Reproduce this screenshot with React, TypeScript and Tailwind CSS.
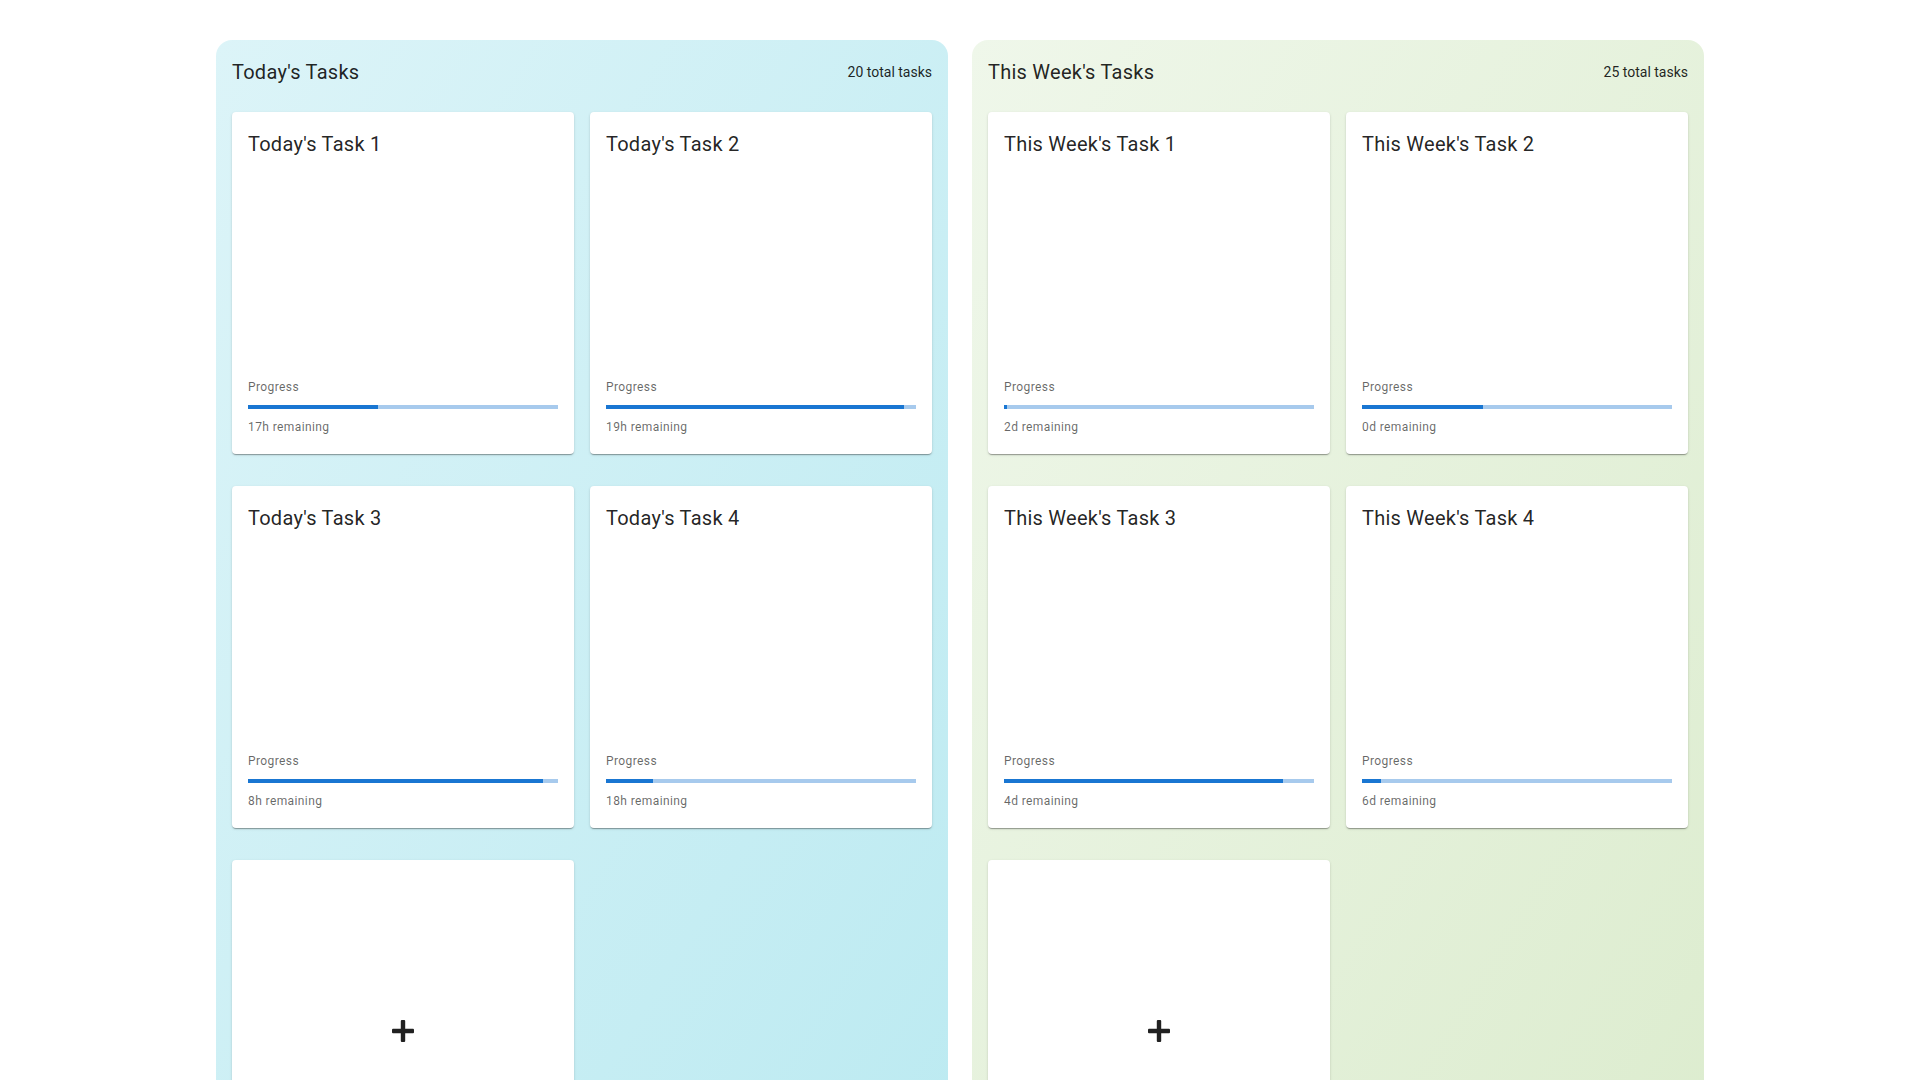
import React from "react";

type Task = { title: string; progress: number; remaining: string };

const TODAY: Task[] = [
  { title: "Today's Task 1", progress: 42, remaining: "17h remaining" },
  { title: "Today's Task 2", progress: 96, remaining: "19h remaining" },
  { title: "Today's Task 3", progress: 95, remaining: "8h remaining" },
  { title: "Today's Task 4", progress: 15, remaining: "18h remaining" },
];

const WEEK: Task[] = [
  { title: "This Week's Task 1", progress: 1, remaining: "2d remaining" },
  { title: "This Week's Task 2", progress: 39, remaining: "0d remaining" },
  { title: "This Week's Task 3", progress: 90, remaining: "4d remaining" },
  { title: "This Week's Task 4", progress: 6, remaining: "6d remaining" },
];

const cardCls =
  "flex h-[342px] flex-col rounded bg-white p-4 pb-[17px] shadow-[0px_2px_1px_-1px_rgba(0,0,0,0.2),0px_1px_1px_0px_rgba(0,0,0,0.14),0px_1px_3px_0px_rgba(0,0,0,0.12)]";

function TaskCard({ task }: { task: Task }) {
  return (
    <div className={cardCls}>
      <h3 className="text-[20px] leading-8 tracking-[0.25px] text-black/[0.87]">
        {task.title}
      </h3>
      <div className="flex-1" />
      <div>
        <div className="text-[12px] leading-5 tracking-[0.4px] text-black/60">
          Progress
        </div>
        <div className="mt-2 h-1 w-full overflow-hidden bg-[#a7caed]">
          <div
            className="h-full bg-[#1976d2]"
            style={{ width: `${task.progress}%` }}
          />
        </div>
        <div className="mt-2 text-[12px] leading-5 tracking-[0.4px] text-black/60">
          {task.remaining}
        </div>
      </div>
    </div>
  );
}

function AddCard() {
  return (
    <div className={`${cardCls} items-center justify-center`}>
      <svg width="22" height="22" viewBox="0 0 22 22" className="text-[#212121]">
        <rect x="8.8" y="0" width="4.4" height="22" rx="1" fill="currentColor" />
        <rect x="0" y="8.8" width="22" height="4.4" rx="1" fill="currentColor" />
      </svg>
    </div>
  );
}

function Panel({
  title,
  total,
  tasks,
  bg,
}: {
  title: string;
  total: number;
  tasks: Task[];
  bg: string;
}) {
  return (
    <section className={`rounded-2xl p-4 ${bg}`}>
      <div className="mb-6 flex items-center justify-between">
        <h2 className="text-[20px] leading-8 tracking-[0.25px] text-black/[0.87]">
          {title}
        </h2>
        <span className="text-[14px] text-black/[0.87]">{total} total tasks</span>
      </div>
      <div className="grid grid-cols-2 gap-x-4 gap-y-8">
        {tasks.map((t) => (
          <TaskCard key={t.title} task={t} />
        ))}
        <AddCard />
      </div>
    </section>
  );
}

export default function App() {
  return (
    <div className="min-h-screen bg-white font-['Roboto','Liberation_Sans',sans-serif]">
      <div className="mx-auto grid w-[1488px] grid-cols-2 gap-6 pt-10">
        <Panel
          title="Today's Tasks"
          total={20}
          tasks={TODAY}
          bg="bg-gradient-to-br from-[#dcf4f8] to-[#bbeaf1]"
        />
        <Panel
          title="This Week's Tasks"
          total={25}
          tasks={WEEK}
          bg="bg-gradient-to-br from-[#eff7ea] to-[#dcecce]"
        />
      </div>
    </div>
  );
}
